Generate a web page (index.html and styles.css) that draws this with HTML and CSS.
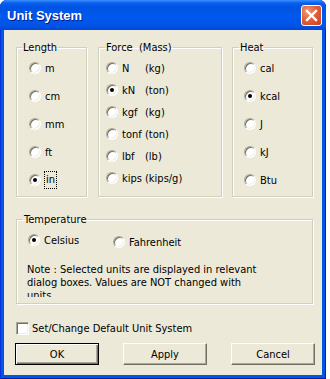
FILE: index.html
```html
<!DOCTYPE html>
<html lang="en">
<head>
    <meta charset="UTF-8">
    <meta name="viewport" content="width=device-width, initial-scale=1.0">
    <title>Unit System</title>
    <link rel="stylesheet" href="styles.css">
</head>
<body>
    <div class="window">
        <div class="titlebar">
            <span class="title">Unit System</span>
            <button class="close" title="Close">
                <svg width="13" height="13" viewBox="0 0 13 13">
                    <path d="M2 2 L11 11 M11 2 L2 11" stroke="#fff" stroke-width="2.4" stroke-linecap="square"/>
                </svg>
            </button>
        </div>
        <div class="client">
            <div class="groups">
                <fieldset class="group length">
                    <legend>Length</legend>
                    <div class="options">
                        <label class="radio"><span class="mark"></span>m</label>
                        <label class="radio"><span class="mark"></span>cm</label>
                        <label class="radio"><span class="mark"></span>mm</label>
                        <label class="radio"><span class="mark"></span>ft</label>
                        <label class="radio"><span class="mark on"></span><span class="focus">in</span></label>
                    </div>
                </fieldset>
                <fieldset class="group force">
                    <legend>Force&nbsp; (Mass)</legend>
                    <div class="options">
                        <label class="radio"><span class="mark"></span><span class="unit">N</span>(kg)</label>
                        <label class="radio"><span class="mark on"></span><span class="unit">kN</span>(ton)</label>
                        <label class="radio"><span class="mark"></span><span class="unit">kgf</span>(kg)</label>
                        <label class="radio"><span class="mark"></span><span class="unit">tonf</span>(ton)</label>
                        <label class="radio"><span class="mark"></span><span class="unit">lbf</span>(lb)</label>
                        <label class="radio"><span class="mark"></span><span class="unit">kips</span>(kips/g)</label>
                    </div>
                </fieldset>
                <fieldset class="group heat">
                    <legend>Heat</legend>
                    <div class="options">
                        <label class="radio"><span class="mark"></span>cal</label>
                        <label class="radio"><span class="mark on"></span>kcal</label>
                        <label class="radio"><span class="mark"></span>J</label>
                        <label class="radio"><span class="mark"></span>kJ</label>
                        <label class="radio"><span class="mark"></span>Btu</label>
                    </div>
                </fieldset>
            </div>

            <fieldset class="group temp">
                <legend>Temperature</legend>
                <div class="options">
                    <div class="temp-row">
                        <label class="radio celsius"><span class="mark on"></span>Celsius</label>
                        <label class="radio fahrenheit"><span class="mark"></span>Fahrenheit</label>
                    </div>
                    <p class="note">Note : Selected units are displayed in relevant dialog boxes. Values are NOT changed with units.</p>
                </div>
            </fieldset>

            <label class="check"><span class="box"></span>Set/Change Default Unit System</label>

            <div class="buttons">
                <button class="btn default">OK</button>
                <button class="btn">Apply</button>
                <button class="btn">Cancel</button>
            </div>
        </div>
    </div>
</body>
</html>
```

FILE: styles.css
```css
body {
    margin: 0;
    background: #fff;
    font-family: "DejaVu Sans Condensed", "DejaVu Sans", sans-serif;
    font-size: 11px;
    color: #000;
}

.window {
    width: 326px;
    height: 379px;
    display: flex;
    flex-direction: column;
    background: #0055e5;
    border-radius: 7px 7px 0 0;
    box-sizing: border-box;
    padding: 0 4px 4px 4px;
    box-shadow: inset 1px 0 #0831d9, inset -1px 0 #001ea0, inset 0 -1px #001ea0;
}

.titlebar {
    height: 30px;
    margin: 0 -4px;
    padding: 0 4px 0 7px;
    display: flex;
    align-items: center;
    justify-content: space-between;
    border-radius: 7px 7px 0 0;
    background: linear-gradient(#3d8fff 0, #0a5fee 3px, #0054e3 7px, #0058ee 55%, #0055e5 85%, #0046d5 100%);
}

.title {
    color: #fff;
    font-family: "Liberation Sans", Arial, sans-serif;
    font-weight: bold;
    font-size: 13px;
    text-shadow: 1px 1px #0a1883;
    padding-top: 1px;
}

.close {
    width: 21px;
    height: 21px;
    padding: 0;
    margin-top: 1px;
    border: 1px solid #fff;
    border-radius: 3px;
    background: radial-gradient(circle at 30% 30%, #f09a78 0, #e2603a 45%, #c8401c 100%);
    display: flex;
    align-items: center;
    justify-content: center;
}

.client {
    flex: 1;
    background: #ece9d8;
    padding: 11px 0 0 12px;
    display: flex;
    flex-direction: column;
}

.groups {
    display: flex;
}

.group {
    margin: 0;
    padding: 0;
    min-width: 0;
    box-sizing: border-box;
    border: 1px solid #d0d0bf;
    box-shadow: inset 1px 1px #fff, 1px 1px #fff;
}

.group legend {
    margin-left: 5px;
    padding: 0 1px;
    line-height: 13px;
}

.length {
    width: 71px;
    height: 156px;
}

.length .options {
    padding-left: 12px;
}

.force {
    width: 124px;
    height: 156px;
    margin-left: 11px;
}

.force legend {
    margin-left: 6px;
}

.force .options {
    padding: 3px 0 0 7px;
}

.heat {
    width: 81px;
    height: 156px;
    margin-left: 10px;
}

.heat legend {
    margin-left: 6px;
}

.heat .options {
    padding-left: 11px;
}

.radio {
    display: flex;
    align-items: center;
    height: 28px;
    white-space: nowrap;
}

.force .radio {
    height: 22px;
}

.mark {
    width: 12px;
    height: 12px;
    box-sizing: border-box;
    border-radius: 50%;
    margin-right: 4px;
    background: #fff;
    border: 1px solid;
    border-color: #aca899 #fff #fff #aca899;
    box-shadow: inset 1px 1px #716f64, inset -1px -1px #f1efe2;
    display: flex;
    align-items: center;
    justify-content: center;
    flex-shrink: 0;
}

.mark.on::after {
    content: "";
    width: 4px;
    height: 4px;
    border-radius: 50%;
    background: #000;
}

.unit {
    display: inline-block;
    width: 23px;
}

.focus {
    outline: 1px dotted #000;
    padding: 1px 1px 2px;
}

.temp {
    width: 297px;
    height: 91px;
    margin-top: 16px;
}

.temp legend {
    margin-left: 6px;
}

.temp .options {
    padding: 7px 0 0 11px;
}

.temp-row {
    display: flex;
    align-items: flex-start;
}

.temp .radio {
    height: 14px;
}

.celsius {
    width: 85px;
}

.fahrenheit {
    margin-top: 2px;
}

.note {
    margin: 14px 0 0 -1px;
    width: 236px;
    height: 34px;
    overflow: hidden;
    line-height: 13px;
}

.check {
    display: flex;
    align-items: center;
    margin-top: 18px;
    height: 13px;
}

.box {
    width: 13px;
    height: 13px;
    box-sizing: border-box;
    margin-right: 3px;
    background: #fff;
    border: 1px solid;
    border-color: #aca899 #fff #fff #aca899;
    box-shadow: inset 1px 1px #716f64, inset -1px -1px #f1efe2;
}

.buttons {
    display: flex;
    justify-content: space-between;
    width: 300px;
    margin: 8px 0 0 -1px;
}

.btn {
    width: 84px;
    height: 22px;
    padding: 0;
    font: inherit;
    color: #000;
    background: #ece9d8;
    border: 1px solid;
    border-color: #fff #716f64 #716f64 #fff;
    box-shadow: inset -1px -1px #aca899;
}

.btn.default {
    border-color: #000;
    box-shadow: inset 1px 1px #fff, inset -1px -1px #716f64, inset -2px -2px #aca899;
}
```
